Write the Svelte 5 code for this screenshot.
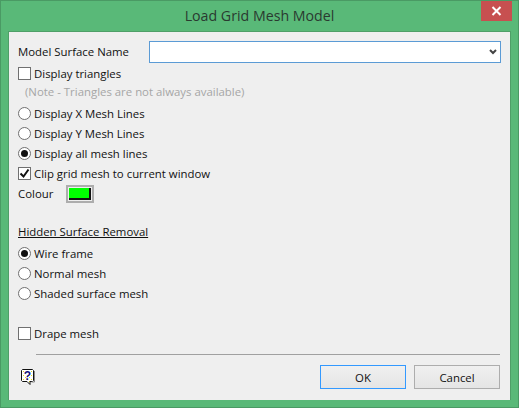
<script>
  const meshLines = [
    { label: 'Display X Mesh Lines', on: false },
    { label: 'Display Y Mesh Lines', on: false },
    { label: 'Display all mesh lines', on: true }
  ];
  const surfaces = [
    { label: 'Wire frame', on: true },
    { label: 'Normal mesh', on: false },
    { label: 'Shaded surface mesh', on: false }
  ];
</script>

<div class="window">
  <header class="titlebar">
    <span class="title">Load Grid Mesh Model</span>
    <button class="close" aria-label="Close">
      <svg width="11" height="10" viewBox="0 0 11 10"><path d="M1.5 1l8 8M9.5 1l-8 8" stroke="#fff" stroke-width="2" fill="none" /></svg>
    </button>
  </header>

  <main class="body">
    <div class="name-row">
      <span class="label">Model Surface Name</span>
      <div class="select">
        <svg width="8" height="6" viewBox="0 0 8 6"><path d="M1 1l3 3 3-3" stroke="#444" stroke-width="2" fill="none" /></svg>
      </div>
    </div>

    <div class="row"><span class="check"></span>Display triangles</div>
    <div class="note">(Note - Triangles are not always available)</div>

    <div class="group">
      {#each meshLines as item}
        <div class="row"><span class="radio" class:on={item.on}></span>{item.label}</div>
      {/each}
      <div class="row">
        <span class="check">
          <svg width="11" height="11" viewBox="0 0 11 11"><path d="M1.5 5.5l3 3 5-7" stroke="#111" stroke-width="2" fill="none" /></svg>
        </span>Clip grid mesh to current window
      </div>
    </div>

    <div class="colour-row">
      <span class="label">Colour</span>
      <div class="swatch"><span></span></div>
    </div>

    <div class="heading">Hidden Surface Removal</div>

    <div class="group surfaces">
      {#each surfaces as item}
        <div class="row"><span class="radio" class:on={item.on}></span>{item.label}</div>
      {/each}
    </div>

    <div class="row drape"><span class="check"></span>Drape mesh</div>

    <hr />

    <footer class="actions">
      <div class="help">
        <svg width="15" height="17" viewBox="0 0 15 17">
          <defs>
            <pattern id="dither" width="4" height="4" patternUnits="userSpaceOnUse">
              <rect width="4" height="4" fill="#fff" />
              <rect width="1" height="1" fill="#e8d820" />
              <rect x="2" y="2" width="1" height="1" fill="#e8d820" />
            </pattern>
          </defs>
          <path d="M1.500 .5h10l1 1v10l-1 1h-2.500v3l-3-3h-4.500l-1-1v-10z" fill="url(#dither)" stroke="#111" />
          <path d="M13.500 2v11h-3" stroke="#888" fill="none" />
          <text x="6.500" y="11" text-anchor="middle" class="help-mark">?</text>
        </svg>
      </div>
      <button class="btn default">OK</button>
      <button class="btn">Cancel</button>
    </footer>
  </main>
</div>

<style>
  :global(body) {
    margin: 0;
  }

  .window {
    width: 519px;
    height: 408px;
    box-sizing: border-box;
    display: flex;
    flex-direction: column;
    background: #59b978;
    border: 1px solid #4a9a64;
    padding: 0 7px 7px;
    font-family: "Open Sans", "Noto Sans", sans-serif;
    font-size: 11.4px;
    color: #111;
  }

  .titlebar {
    height: 30px;
    box-sizing: border-box;
    padding-bottom: 2px;
    flex: none;
    display: flex;
    align-items: center;
    justify-content: center;
    position: relative;
  }

  .title {
    font-size: 14.2px;
    color: #2a3a30;
  }

  .close {
    position: absolute;
    right: -1px;
    top: 0;
    width: 31px;
    height: 20px;
    padding: 0;
    border: none;
    background: #c75050;
    display: flex;
    align-items: center;
    justify-content: center;
  }

  .body {
    flex: 1;
    background: #efefef;
    padding: 9px 10px 0 9px;
    display: flex;
    flex-direction: column;
    border: 1px solid #4f9f68;
    border-bottom: none;
    min-height: 0;
  }

  .name-row {
    display: flex;
    align-items: center;
    height: 22px;
  }

  .label {
    line-height: 16px;
  }

  .select {
    margin-left: auto;
    margin-right: -1px;
    width: 352px;
    height: 22px;
    box-sizing: border-box;
    border: 1px solid #5b9bd5;
    background: #fff;
    display: flex;
    align-items: center;
    justify-content: flex-end;
    padding-right: 3px;
  }

  .row {
    display: flex;
    align-items: center;
    gap: 3px;
    height: 20px;
    white-space: nowrap;
  }

  .note {
    height: 16px;
    line-height: 16px;
    margin: 1px 0 3px 7px;
    color: #a6a6a6;
  }

  .group {
    display: flex;
    flex-direction: column;
  }

  .check,
  .radio {
    width: 13px;
    height: 13px;
    flex: none;
    box-sizing: border-box;
    border: 1px solid #707070;
    background: #fff;
    display: flex;
    align-items: center;
    justify-content: center;
  }

  .radio {
    border-radius: 50%;
  }

  .radio.on::after {
    content: "";
    width: 7px;
    height: 7px;
    border-radius: 50%;
    background: #111;
  }

  .colour-row {
    display: flex;
    align-items: center;
    height: 20px;
    margin-top: 1px;
  }

  .colour-row .label {
    width: 48px;
  }

  .swatch {
    width: 28px;
    height: 18px;
    box-sizing: border-box;
    border: 2px solid #adadad;
    background: #efefef;
    padding: 1px;
    display: flex;
  }

  .swatch span {
    flex: 1;
    background: #00ff00;
    border-right: 2px solid #111;
    border-bottom: 2px solid #111;
  }

  .heading {
    margin-top: 19px;
    height: 18px;
    line-height: 18px;
    text-decoration: underline;
  }

  .surfaces {
    margin-top: 2px;
  }

  .drape {
    margin-top: 20px;
  }

  hr {
    width: 464px;
    align-self: flex-end;
    margin: 11px 0 0;
    border: none;
    border-top: 1px solid #a0a0a0;
  }

  .actions {
    display: flex;
    align-items: center;
    gap: 8px;
    margin-top: 10px;
  }

  .help {
    margin-right: auto;
    margin-left: 3px;
    height: 17px;
  }

  .help-mark {
    font-family: "Liberation Sans", sans-serif;
    font-size: 12px;
    font-weight: 700;
    fill: #101080;
  }

  .btn {
    width: 86px;
    height: 24px;
    box-sizing: border-box;
    padding: 0;
    border: 1px solid #adadad;
    background: linear-gradient(#f0f0f0, #e5e5e5);
    font: inherit;
    color: #111;
  }

  .default {
    border-color: #3399ff;
  }
</style>
